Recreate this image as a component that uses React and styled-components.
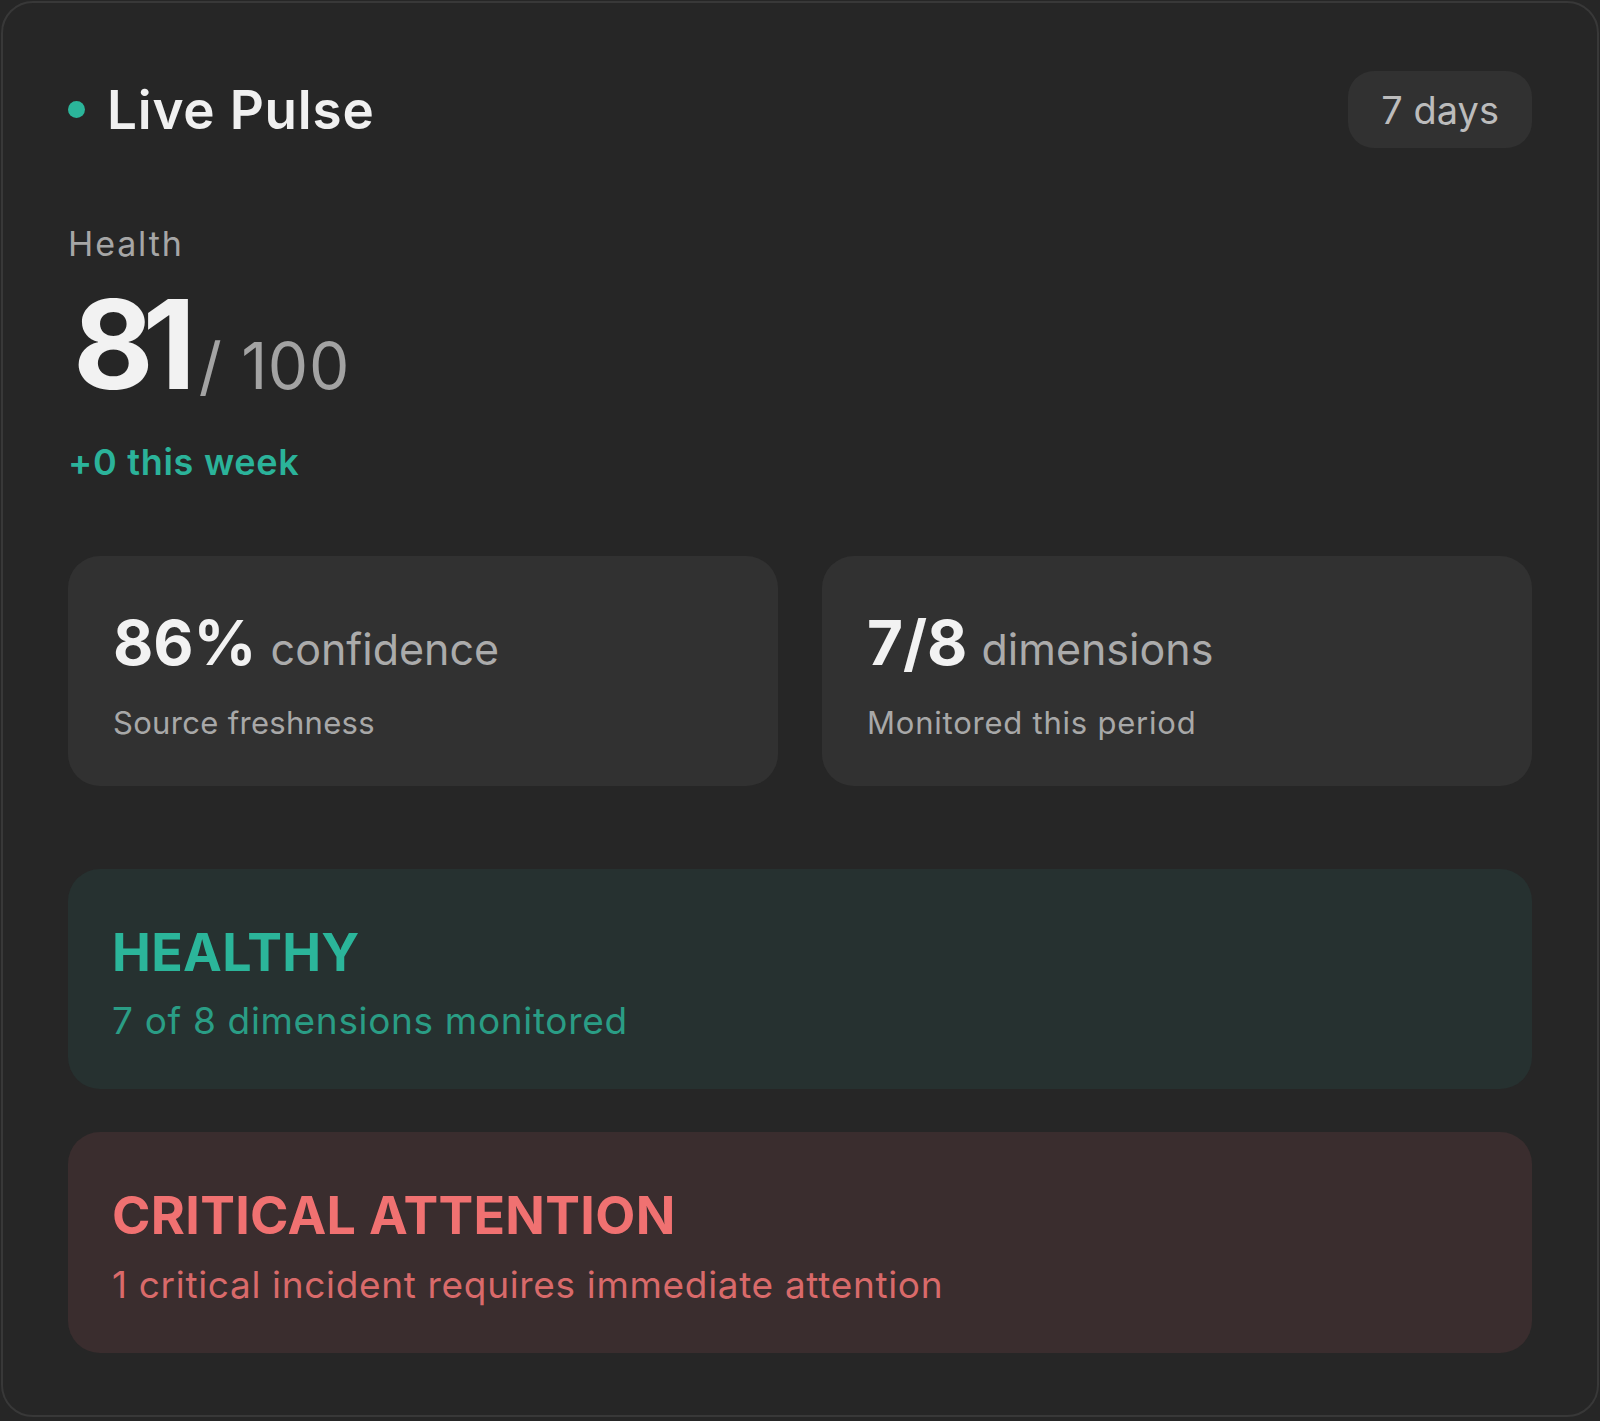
import React from 'react';
import styled, { createGlobalStyle } from 'styled-components';

const GlobalStyle = createGlobalStyle`
    html, body {
        margin: 0;
        padding: 0;
        background: #262626;
        font-family: Inter, "Noto Sans", sans-serif;
        -webkit-font-smoothing: antialiased;
    }
`;

const stats = [
    { value: '86%', unit: 'confidence', sub: 'Source freshness', spacing: '0.01em' },
    { value: '7/8', unit: 'dimensions', sub: 'Monitored this period', spacing: '0.025em' }
];

const banners = [
    {
        tone: 'healthy',
        title: 'HEALTHY',
        text: '7 of 8 dimensions monitored'
    },
    {
        tone: 'critical',
        title: 'CRITICAL ATTENTION',
        text: '1 critical incident requires immediate attention'
    }
];

const tones = {
    healthy: { bg: '#263130', title: '#2bb59a', text: '#2a9d85' },
    critical: { bg: '#3a2d2e', title: '#f07171', text: '#d96a6a' }
};

export default function App() {
    return (
        <>
            <GlobalStyle />
            <Card>
                <Header>
                    <Title>
                        <Dot />
                        Live Pulse
                    </Title>
                    <Pill>7 days</Pill>
                </Header>

                <HealthLabel>Health</HealthLabel>
                <ScoreRow>
                    <Score>81</Score>
                    <ScoreMax>/ 100</ScoreMax>
                </ScoreRow>
                <Delta>+0 this week</Delta>

                <StatsGrid>
                    {stats.map(s => (
                        <StatCard key={s.unit}>
                            <StatMain>
                                <StatValue>{s.value}</StatValue>
                                <StatUnit>{s.unit}</StatUnit>
                            </StatMain>
                            <StatSub $spacing={s.spacing}>{s.sub}</StatSub>
                        </StatCard>
                    ))}
                </StatsGrid>

                {banners.map((b, i) => (
                    <Banner key={b.tone} $tone={b.tone} $first={i === 0}>
                        <BannerTitle $tone={b.tone}>{b.title}</BannerTitle>
                        <BannerText $tone={b.tone}>{b.text}</BannerText>
                    </Banner>
                ))}
            </Card>
        </>
    );
}

const Card = styled.div`
    margin: 1px;
    border: 2px solid #383838;
    border-radius: 32px;
    padding: 68px 65px 62px;
    display: flex;
    flex-direction: column;
    background: #262626;
`;

const Header = styled.div`
    display: flex;
    justify-content: space-between;
    align-items: center;
    height: 77px;
`;

const Title = styled.h1`
    margin: 0;
    display: flex;
    align-items: center;
    gap: 22px;
    font-size: 53px;
    font-weight: 600;
    color: #f0f0f0;
    letter-spacing: 0.015em;
`;

const Dot = styled.span`
    width: 17px;
    height: 17px;
    border-radius: 50%;
    background: #2bb59a;
`;

const Pill = styled.div`
    height: 77px;
    padding: 0 33px;
    border-radius: 26px;
    background: #313131;
    display: flex;
    align-items: center;
    font-size: 38px;
    color: #bcbcbc;
`;

const HealthLabel = styled.div`
    margin-top: 77px;
    font-size: 34px;
    line-height: 38.4px;
    color: #a6a6a6;
    letter-spacing: 0.055em;
`;

const ScoreRow = styled.div`
    margin-top: 17px;
    display: flex;
    align-items: baseline;
    gap: 14px;
`;

const Score = styled.span`
    margin-left: 5px;
    font-size: 124px;
    line-height: 128px;
    font-weight: 700;
    color: #f2f2f2;
    letter-spacing: -0.09em;
`;

const ScoreMax = styled.span`
    font-size: 64px;
    line-height: 1;
    color: #a3a3a3;
    letter-spacing: 0.01em;
`;

const Delta = styled.div`
    margin-top: 33px;
    font-size: 36px;
    line-height: 43.2px;
    font-weight: 600;
    color: #2bb39a;
    letter-spacing: 0.02em;
`;

const StatsGrid = styled.div`
    margin-top: 71px;
    display: grid;
    grid-template-columns: 1fr 1fr;
    gap: 44px;
`;

const StatCard = styled.div`
    background: #313131;
    border-radius: 32px;
    padding: 50px 45px 43px;
`;

const StatMain = styled.div`
    display: flex;
    align-items: baseline;
    gap: 14px;
    line-height: 74px;
`;

const StatValue = styled.span`
    font-size: 62px;
    font-weight: 700;
    color: #f2f2f2;
`;

const StatUnit = styled.span`
    font-size: 43px;
    color: #ababab;
`;

const StatSub = styled.div`
    margin-top: 17px;
    font-size: 31px;
    line-height: 40px;
    color: #a8a8a8;
    letter-spacing: ${p => p.$spacing};
`;

const Banner = styled.div`
    margin-top: ${p => (p.$first ? '83px' : '43px')};
    background: ${p => tones[p.$tone].bg};
    border-radius: 32px;
    padding: 52px 44px 44px;
`;

const BannerTitle = styled.div`
    font-size: 52px;
    line-height: 64.8px;
    font-weight: 700;
    color: ${p => tones[p.$tone].title};
    letter-spacing: 0.006em;
`;

const BannerText = styled.div`
    margin-top: 12px;
    font-size: 37px;
    line-height: 48px;
    color: ${p => tones[p.$tone].text};
    letter-spacing: 0.018em;
`;
